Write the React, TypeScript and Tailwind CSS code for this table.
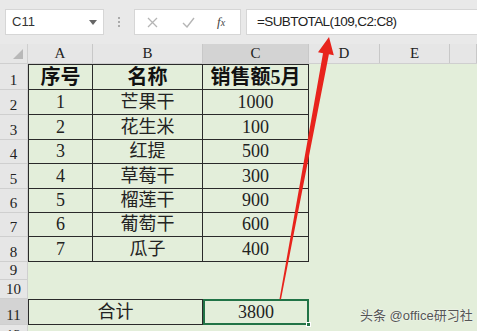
import React from "react";

const serif = { fontFamily: '"Liberation Serif", "Noto Sans CJK SC", serif' };
const cjk = { fontFamily: '"Liberation Serif", "Noto Sans CJK SC", serif' };
const sans = { fontFamily: '"Liberation Sans", "Noto Sans CJK SC", sans-serif' };

const colW = ["w-[28px]", "w-[65px]", "w-[110px]", "w-[106px]", "w-[71px]", "w-[70px]", "flex-1"];
const rowH = ["h-[26px]", "h-[25px]", "h-[25px]", "h-[24px]", "h-[25px]", "h-[24px]", "h-[24px]", "h-[25px]", "h-[18px]", "h-[19px]", "h-[26px]", "h-[20px]"];

const data: [string, string, string][] = [
  ["1", "芒果干", "1000"],
  ["2", "花生米", "100"],
  ["3", "红提", "500"],
  ["4", "草莓干", "300"],
  ["5", "榴莲干", "900"],
  ["6", "葡萄干", "600"],
  ["7", "瓜子", "400"],
];

function RowHead({ n, sel }: { n: number; sel?: boolean }) {
  return (
    <div
      className={`w-[28px] shrink-0 flex items-end justify-center border-r border-b border-[#cfcfcf] text-[15px] leading-[18px] text-[#222] ${sel ? "bg-[#d3d3d3]" : "bg-[#e6e6e6]"}`}
      style={serif}
    >
      {n}
    </div>
  );
}

export default function App() {
  return (
    <div className="relative w-[477px] h-[331px] overflow-hidden bg-[#e3eeda]">
      {/* toolbar */}
      <div className="h-[44px] bg-[#e9e9e9] flex items-start pt-[9px] pl-[5px]">
        <div className="w-[99px] h-[26px] bg-white border border-[#d6d6d6] flex items-center pl-[6px] pr-[6px]">
          <span className="text-[13px] text-[#333] flex-1" style={sans}>C11</span>
          <svg width="8" height="5" viewBox="0 0 8 5"><path d="M0 0 L8 0 L4 5 Z" fill="#666" /></svg>
        </div>
        <div className="w-[30px] h-[26px] flex flex-col items-center justify-center gap-[2px]">
          <div className="w-[2px] h-[2px] bg-[#aaa]" />
          <div className="w-[2px] h-[2px] bg-[#aaa]" />
          <div className="w-[2px] h-[2px] bg-[#aaa]" />
        </div>
        <div className="w-[107px] h-[26px] bg-white border border-[#d6d6d6] flex items-center">
          <svg className="ml-[12px]" width="11" height="11" viewBox="0 0 11 11"><path d="M1 1 L10 10 M10 1 L1 10" stroke="#b5b5b5" strokeWidth="1.3" /></svg>
          <svg className="ml-[24px]" width="13" height="11" viewBox="0 0 13 11"><path d="M1 6 L5 10 L12 1" stroke="#b5b5b5" strokeWidth="1.4" fill="none" /></svg>
          <span className="ml-[22px] text-[13px] italic text-[#444]" style={{ fontFamily: '"Liberation Serif", serif' }}>f<span className="text-[10px]">x</span></span>
        </div>
        <div className="ml-[5px] flex-1 h-[26px] bg-white border border-[#d6d6d6] border-r-0 flex items-center pl-[10px]">
          <span className="text-[13.5px] tracking-[-0.6px] text-[#222]" style={sans}>=SUBTOTAL(109,C2:C8)</span>
        </div>
      </div>

      {/* column header */}
      <div className="h-[20px] flex bg-[#e6e6e6] border-b border-[#cfcfcf]">
        <div className="w-[28px] shrink-0 relative border-r border-[#cfcfcf]">
          <svg className="absolute right-[4px] bottom-[4px]" width="10" height="10" viewBox="0 0 10 10"><path d="M10 0 L10 10 L0 10 Z" fill="#b8b8b8" /></svg>
        </div>
        {["A", "B", "C", "D", "E", ""].map((c, i) => (
          <div
            key={i}
            className={`${colW[i + 1]} shrink-0 flex items-end justify-center pb-[1px] text-[15px] leading-[17px] text-[#222] border-r border-[#c8c8c8] ${c === "C" ? "bg-[#d3d3d3]" : ""}`}
            style={serif}
          >
            {c}
          </div>
        ))}
      </div>

      {/* row 1 */}
      <div className={`${rowH[0]} flex`}>
        <RowHead n={1} />
        <div className={`${colW[1]} shrink-0 border border-[#2a2a2a] flex items-center justify-center text-[20px] font-bold text-[#111]`} style={cjk}>序号</div>
        <div className={`${colW[2]} shrink-0 border-y border-r border-[#2a2a2a] flex items-center justify-center text-[20px] font-bold text-[#111]`} style={cjk}>名称</div>
        <div className={`${colW[3]} shrink-0 border-y border-r border-[#2a2a2a] flex items-center justify-center text-[20px] font-bold text-[#111]`} style={cjk}>销售额5月</div>
      </div>
      {data.map((r, i) => (
        <div key={i} className={`${rowH[i + 1]} flex`}>
          <RowHead n={i + 2} />
          <div className={`${colW[1]} shrink-0 border-x border-b border-[#2a2a2a] flex items-center justify-center text-[18px] text-[#222]`} style={serif}>{r[0]}</div>
          <div className={`${colW[2]} shrink-0 border-r border-b border-[#2a2a2a] flex items-center justify-center text-[18px] text-[#222]`} style={cjk}>{r[1]}</div>
          <div className={`${colW[3]} shrink-0 border-r border-b border-[#2a2a2a] flex items-center justify-center text-[18px] text-[#222]`} style={serif}>{r[2]}</div>
        </div>
      ))}
      <div className={`${rowH[8]} flex`}><RowHead n={9} /></div>
      <div className={`${rowH[9]} flex`}><RowHead n={10} /></div>
      <div className={`${rowH[10]} flex`}>
        <RowHead n={11} sel />
        <div className="w-[175px] shrink-0 border border-[#2a2a2a] flex items-center justify-center text-[18px] text-[#222]" style={cjk}>合计</div>
        <div className={`${colW[3]} shrink-0 relative border-2 border-[#217346] flex items-center justify-center text-[18px] text-[#222]`} style={serif}>
          3800
          <div className="absolute right-[-4px] bottom-[-4px] w-[5px] h-[5px] bg-[#217346] border border-white" />
        </div>
      </div>
      <div className={`${rowH[11]} flex`}><RowHead n={12} /></div>

      {/* watermark */}
      <div className="absolute left-[360px] top-[306px] text-[13px] text-[#555] [text-shadow:0_0_2px_#fff]" style={sans}>
        头条 @office研习社
      </div>

      {/* red arrow */}
      <svg className="absolute left-0 top-0 pointer-events-none" width="477" height="331" viewBox="0 0 477 331">
        <polygon points="329,37 333.8,55.2 328.9,54.3 281,299.3 279.5,299 323,53.2 318,52.2" fill="#e8231c" />
      </svg>
    </div>
  );
}
